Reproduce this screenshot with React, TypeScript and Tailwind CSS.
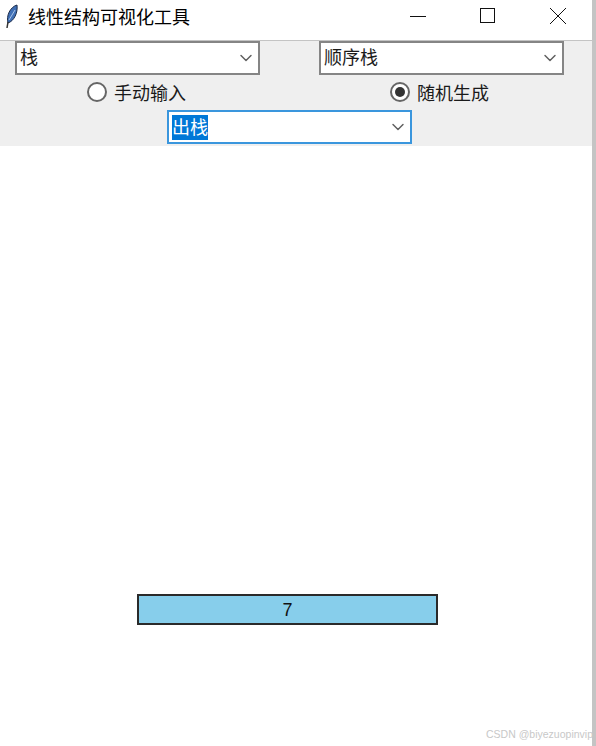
import { ChevronDown } from 'lucide-react'

const uiFont = "font-['Noto_Sans_CJK_SC','Liberation_Sans',sans-serif]"

function Feather() {
  return (
    <svg width="18" height="28" viewBox="0 0 18 28">
      <path d="M6 21 C4 14 8 5 15 3 C16 11 12 19 6 21 Z" fill="#3f6fb5" stroke="#1c2c4a" strokeWidth="1" />
      <path d="M6 20 L5 26" stroke="#333" strokeWidth="1.5" />
      <path d="M7 18 L13 8" stroke="#a9c4e8" strokeWidth="1" />
    </svg>
  )
}

function Combo({ value, focused }: { value: string; focused?: boolean }) {
  return (
    <div
      className={`flex h-[34px] w-[245px] items-center justify-between bg-white pl-[3px] pr-[2px] text-[18px] leading-none border-2 ${
        focused ? 'border-[#3a96dd]' : 'border-[#858585]'
      }`}
    >
      {focused ? (
        <span className="h-[25px] bg-[#0078d7] leading-[22px] text-white">{value}</span>
      ) : (
        <span className="pb-[4px] text-[#1a1a1a]">{value}</span>
      )}
      <ChevronDown size={20} strokeWidth={1.75} className="text-[#606060]" />
    </div>
  )
}

function Radio({ label, checked }: { label: string; checked?: boolean }) {
  return (
    <div className="flex items-center gap-[7px] text-[18px] leading-none text-[#1a1a1a]">
      <span className="flex h-[20px] w-[20px] items-center justify-center rounded-full border-2 border-[#666] bg-white">
        {checked && <span className="h-[10px] w-[10px] rounded-full bg-[#333]" />}
      </span>
      {label}
    </div>
  )
}

export default function App() {
  return (
    <div className={`flex h-[746px] w-[596px] bg-white ${uiFont}`}>
      <div className="flex w-[592px] flex-col">
        {/* 标题栏 */}
        <div className="flex h-[41px] items-center border-b border-[#c4c4c4] bg-white pb-[8px]">
          <div className="ml-[2px] mr-[8px] flex">
            <Feather />
          </div>
          <span className="text-[18px] leading-none text-black">线性结构可视化工具</span>
          <div className="ml-auto flex items-center">
            <svg width="18" height="18" viewBox="0 0 18 18" className="mr-[52px]">
              <path d="M1 9.5 H17" stroke="#111" strokeWidth="1" />
            </svg>
            <svg width="18" height="18" viewBox="0 0 18 18" className="mr-[52px]">
              <rect x="1.5" y="1.5" width="14" height="14" fill="none" stroke="#111" strokeWidth="1" />
            </svg>
            <svg width="18" height="18" viewBox="0 0 18 18" className="mr-[25px]">
              <path d="M1 1 L17 17 M17 1 L1 17" stroke="#111" strokeWidth="1" />
            </svg>
          </div>
        </div>

        {/* 选项区域 */}
        <div className="flex h-[105px] flex-col bg-[#efefef] pl-[15px]">
          <div className="flex gap-[59px]">
            <Combo value="栈" />
            <Combo value="顺序栈" />
          </div>
          <div className="mt-[7px] flex">
            <div className="ml-[72px] w-[303px]">
              <Radio label="手动输入" />
            </div>
            <Radio label="随机生成" checked />
          </div>
          <div className="mt-[8px] ml-[152px]">
            <Combo value="出栈" focused />
          </div>
        </div>

        {/* 画布 */}
        <div className="relative flex-1 bg-white">
          <div className="absolute left-[137px] top-[448px] flex h-[31px] w-[301px] items-center justify-center border-2 border-[#2a2a2a] bg-[#87ceeb] font-['Liberation_Sans',sans-serif] text-[18px] text-[#111]">
            <span className="pt-[1px]">7</span>
          </div>
          <span className="absolute right-[-1px] bottom-[3px] font-['Liberation_Sans',sans-serif] text-[10.5px] text-[#c8c8c8]">
            CSDN @biyezuopinvip
          </span>
        </div>
      </div>
      <div className="w-[4px] bg-[#c4c4c4]" />
    </div>
  )
}
